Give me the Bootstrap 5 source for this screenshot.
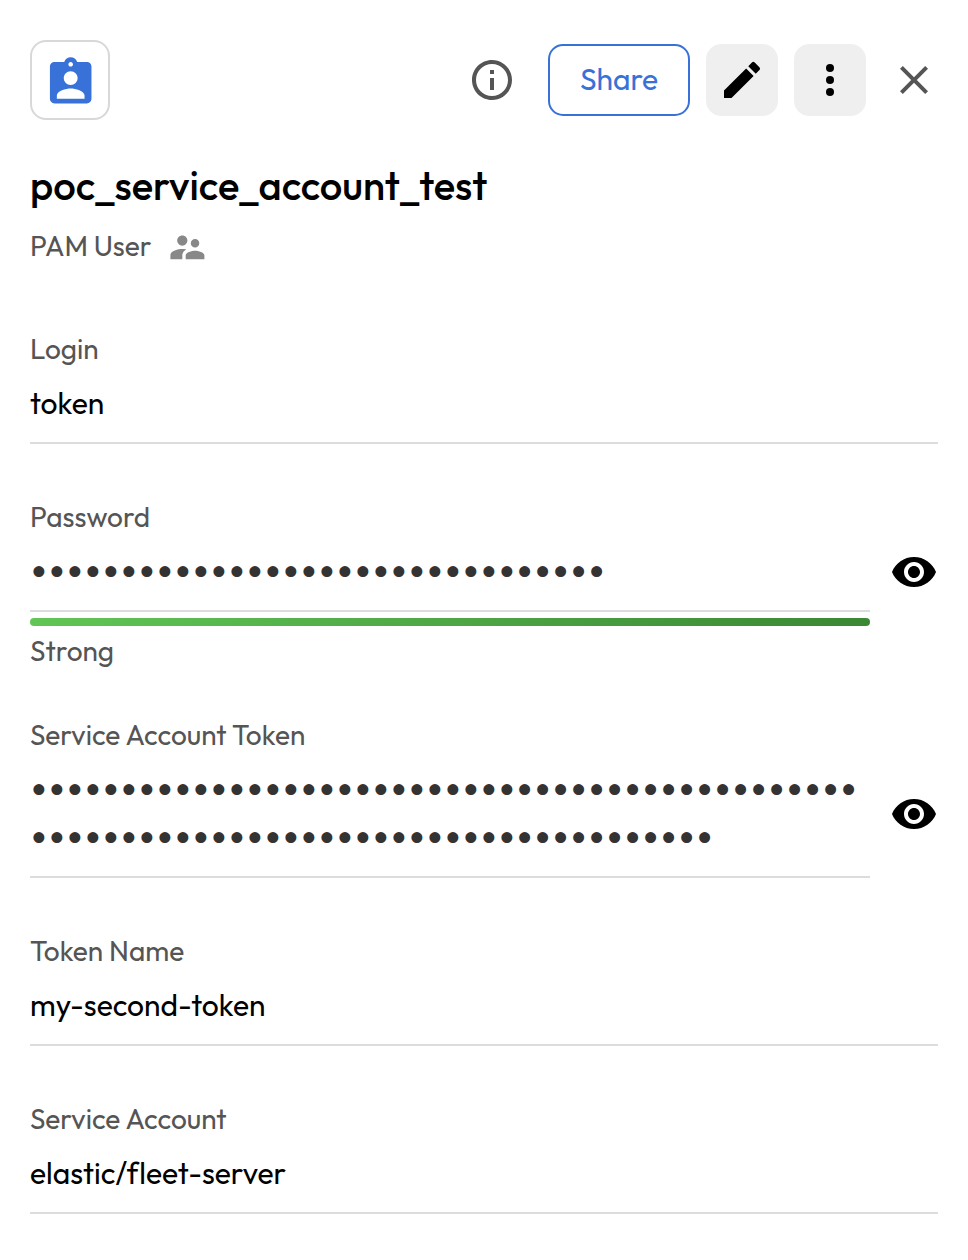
<!DOCTYPE html>
<html lang="en">
<head>
<meta charset="utf-8">
<meta name="viewport" content="width=device-width, initial-scale=1">
<title>poc_service_account_test</title>
<link href="https://cdn.jsdelivr.net/npm/bootstrap@5.3.0/dist/css/bootstrap.min.css" rel="stylesheet">
<style>
body{font-family:Outfit,Lato,sans-serif;color:#000;background:#fff;font-variant-ligatures:none}
svg{display:block;flex:none}
.record{padding:40px 30px 0}
.record-icon{width:80px;height:80px;border:2px solid #d8d8d8;border-radius:16px;color:#3872d8;padding:5px 0 0 .6px}
.btn-share{--bs-btn-color:#3872d8;--bs-btn-border-color:#3872d8;--bs-btn-border-width:2px;--bs-btn-border-radius:15px;--bs-btn-padding-y:0;--bs-btn-padding-x:0;--bs-btn-font-size:30px;width:142px;height:72px;padding-bottom:1px;margin-left:32px}
.btn-tool{--bs-btn-bg:#efefef;--bs-btn-color:#000;--bs-btn-border-color:#efefef;--bs-btn-padding-x:0;--bs-btn-padding-y:0;--bs-btn-border-radius:15px;width:72px;height:72px;margin-left:16px}
.btn-plain{--bs-btn-padding-x:0;--bs-btn-padding-y:0;--bs-btn-border-width:0;--bs-btn-color:#555}
.record-title{font-size:40px;line-height:52px;font-weight:500;margin:39px 0 15px}
.record-type{height:50px}
.record-type svg{margin:1px 0 0 15.8px}
.muted-line{font-size:28px;line-height:34px;padding-bottom:2px;color:#555}
.record-type.muted-line{padding-bottom:8px}
.record-type span{padding-bottom:2px}
.field{margin-top:56px}
.field-value{font-size:30px;line-height:48px;margin-top:-1px;padding-bottom:15px;border-bottom:2px solid #dcdcdc}
.field-head{margin-bottom:12px}
.field-main{width:840px}
.masked{font-family:"DejaVu Sans",sans-serif;letter-spacing:.3px;color:#333;-webkit-text-stroke:2.2px #333;word-break:break-all;margin-top:0;padding-top:1px;padding-bottom:13px}
.strength{height:8px;border-radius:4px;margin-top:6px;background:linear-gradient(135deg,#61c655,#3b8734)}
.reveal{margin-left:20px;margin-bottom:16px}
</style>
</head>
<body>
<main class="record">
  <header class="d-flex align-items-center">
    <div class="record-icon d-flex align-items-center justify-content-center me-auto">
      <svg width="55.4" height="55.4" viewBox="0 0 24 24" fill="currentColor"><path d="M19 3h-4.18C14.4 1.84 13.3 1 12 1c-1.3 0-2.4.84-2.82 2H5c-1.1 0-2 .9-2 2v14c0 1.1.9 2 2 2h14c1.1 0 2-.9 2-2V5c0-1.1-.9-2-2-2zm-7 0c.55 0 1 .45 1 1s-.45 1-1 1-1-.45-1-1 .45-1 1-1zm0 4c1.66 0 3 1.34 3 3s-1.34 3-3 3-3-1.34-3-3 1.34-3 3-3zm6 12H6v-1.4c0-2 4-3.1 6-3.1s6 1.1 6 3.1V19z"/></svg>
    </div>
    <button class="btn btn-plain" aria-label="Info"><svg width="48" height="48" viewBox="0 0 24 24" fill="currentColor"><path d="M11 7h2v2h-2zm0 4h2v6h-2zm1-9C6.48 2 2 6.48 2 12s4.48 10 10 10 10-4.48 10-10S17.52 2 12 2zm0 18c-4.41 0-8-3.59-8-8s3.59-8 8-8 8 3.59 8 8-3.59 8-8 8z"/></svg></button>
    <button class="btn btn-share">Share</button>
    <button class="btn btn-tool d-flex align-items-center justify-content-center" aria-label="Edit"><svg width="48" height="48" viewBox="0 0 24 24" fill="currentColor"><path d="M3 17.25V21h3.75L17.81 9.94l-3.75-3.75L3 17.25zM20.71 7.04c.39-.39.39-1.02 0-1.41l-2.34-2.34a.996.996 0 0 0-1.41 0l-1.83 1.83 3.75 3.75 1.83-1.83z"/></svg></button>
    <button class="btn btn-tool d-flex align-items-center justify-content-center" aria-label="More"><svg width="48" height="48" viewBox="0 0 24 24" fill="currentColor"><circle cx="12" cy="6" r="2"/><circle cx="12" cy="12" r="2"/><circle cx="12" cy="18" r="2"/></svg></button>
    <button class="btn btn-plain ms-4" aria-label="Close"><svg width="48" height="48" viewBox="0 0 24 24" fill="currentColor"><path d="M19 6.41L17.59 5 12 10.59 6.41 5 5 6.41 10.59 12 5 17.59 6.41 19 12 13.41 17.59 19 19 17.59 13.41 12z"/></svg></button>
  </header>

  <h1 class="record-title">poc_service_account_test</h1>
  <div class="muted-line d-flex align-items-center record-type"><span>PAM User</span>
    <svg width="40.8" height="40.8" viewBox="0 0 24 24" fill="#888"><path d="M16.5 12c1.38 0 2.49-1.12 2.49-2.5S17.88 7 16.5 7 14 8.12 14 9.5s1.12 2.5 2.5 2.5zM9 11c1.66 0 2.99-1.34 2.99-3S10.66 5 9 5 6 6.34 6 8s1.34 3 3 3zm7.5 3c-1.83 0-5.5.92-5.5 2.75V19h11v-2.25c0-1.83-3.67-2.75-5.5-2.75zM9 13c-2.33 0-7 1.17-7 3.5V19h7v-2.25c0-.85.33-2.34 2.37-3.47C10.5 13.1 9.66 13 9 13z"/></svg>
  </div>

  <section class="field">
    <div class="muted-line field-head">Login</div>
    <div class="field-value">token</div>
  </section>
  <section class="field">
    <div class="muted-line field-head">Password</div>
    <div class="d-flex align-items-center">
      <div class="field-value field-main masked">••••••••••••••••••••••••••••••••</div>
      <button class="btn btn-plain reveal" aria-label="Show password"><svg width="48" height="48" viewBox="0 0 24 24" fill="#000"><path d="M12 4.5C7 4.5 2.73 7.61 1 12c1.73 4.39 6 7.5 11 7.5s9.27-3.11 11-7.5c-1.73-4.39-6-7.5-11-7.5zM12 17c-2.76 0-5-2.24-5-5s2.24-5 5-5 5 2.24 5 5-2.24 5-5 5zm0-8c-1.66 0-3 1.34-3 3s1.34 3 3 3 3-1.34 3-3-1.34-3-3-3z"/></svg></button>
    </div>
    <div class="strength field-main"></div>
    <div class="muted-line mt-2">Strong</div>
  </section>
  <section class="field mt-5">
    <div class="muted-line field-head">Service Account Token</div>
    <div class="d-flex align-items-center">
      <div class="field-value field-main masked">••••••••••••••••••••••••••••••••••••••••••••••••••••••••••••••••••••••••••••••••••••</div>
      <button class="btn btn-plain reveal" aria-label="Show token"><svg width="48" height="48" viewBox="0 0 24 24" fill="#000"><path d="M12 4.5C7 4.5 2.73 7.61 1 12c1.73 4.39 6 7.5 11 7.5s9.27-3.11 11-7.5c-1.73-4.39-6-7.5-11-7.5zM12 17c-2.76 0-5-2.24-5-5s2.24-5 5-5 5 2.24 5 5-2.24 5-5 5zm0-8c-1.66 0-3 1.34-3 3s1.34 3 3 3 3-1.34 3-3-1.34-3-3-3z"/></svg></button>
    </div>
  </section>
  <section class="field">
    <div class="muted-line field-head">Token Name</div>
    <div class="field-value">my-second-token</div>
  </section>
  <section class="field">
    <div class="muted-line field-head">Service Account</div>
    <div class="field-value">elastic/fleet-server</div>
  </section>
</main>
<script src="https://cdn.jsdelivr.net/npm/bootstrap@5.3.0/dist/js/bootstrap.bundle.min.js"></script>
</body>
</html>
